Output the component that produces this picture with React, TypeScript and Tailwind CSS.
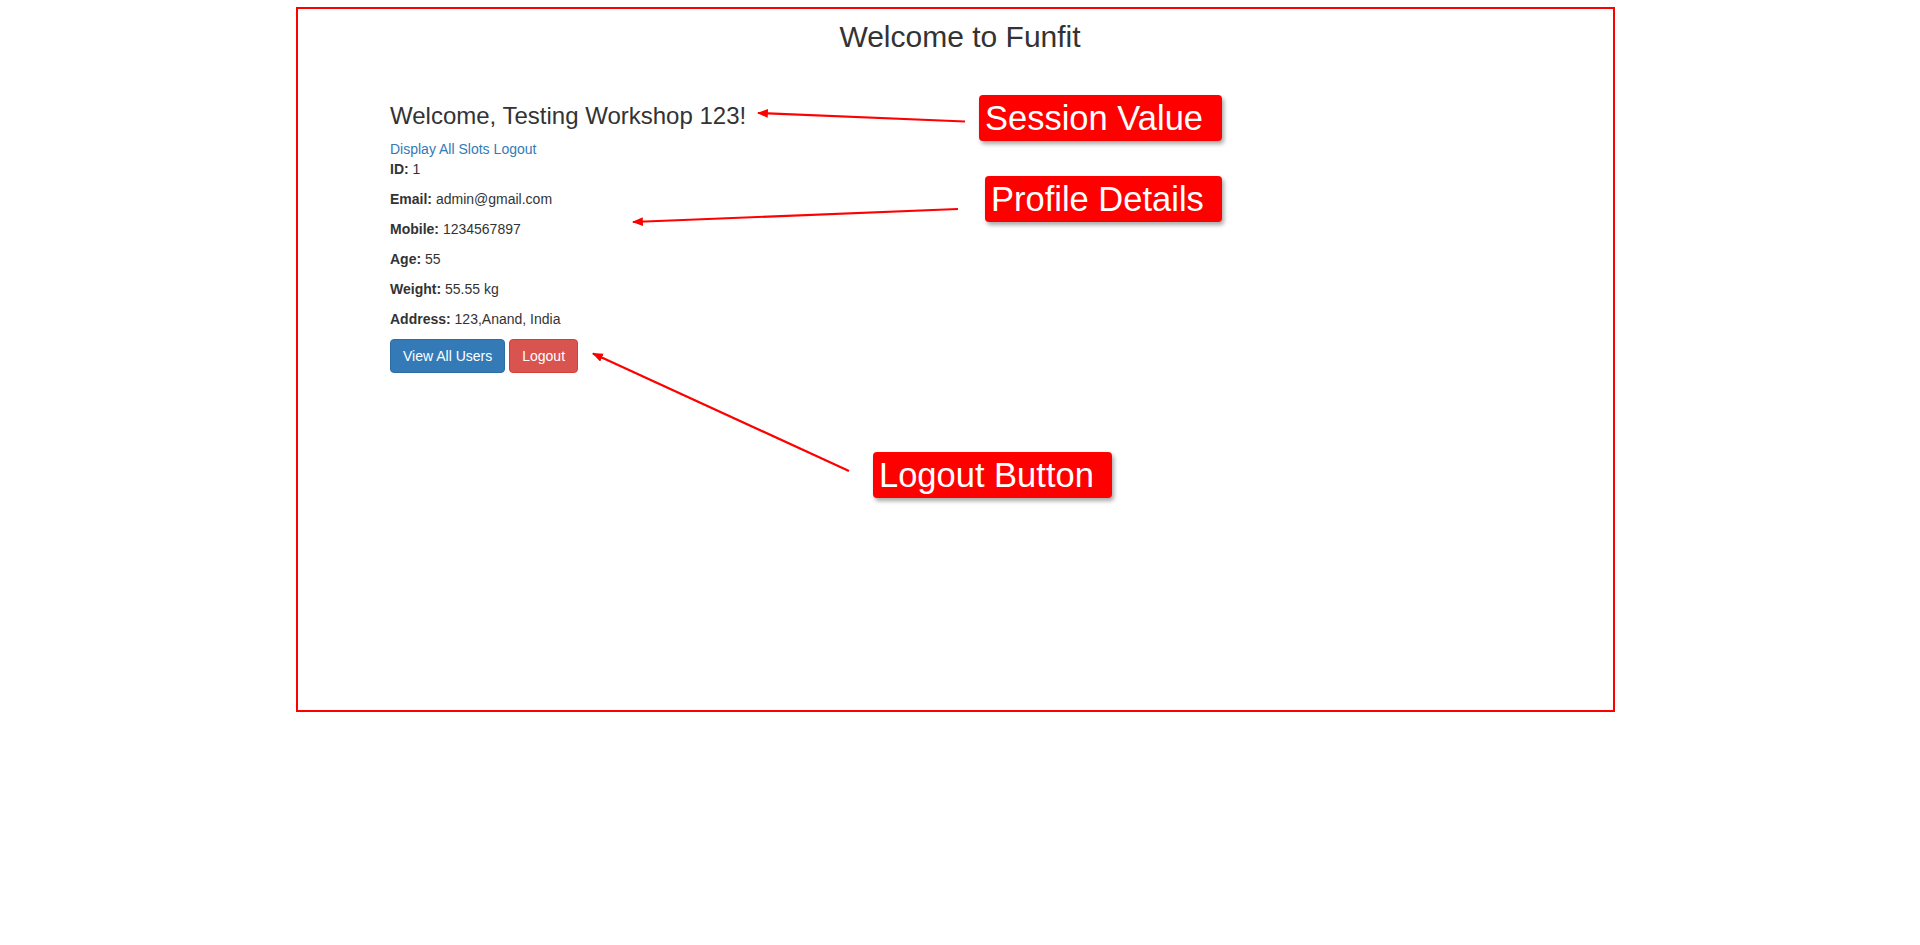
import React from "react";

const font = { fontFamily: '"Liberation Sans", Arial, Helvetica, sans-serif' };

function Label({ text, className }: { text: string; className: string }) {
  return (
    <div
      className={`absolute h-[46px] bg-[#ff0000] text-white text-[34.5px] leading-[46px] pl-[6px] rounded-[4px] shadow-[2px_3px_4px_rgba(0,0,0,0.35)] whitespace-nowrap ${className}`}
    >
      {text}
    </div>
  );
}

export default function App() {
  const rows: [string, string][] = [
    ["Email:", "admin@gmail.com"],
    ["Mobile:", "1234567897"],
    ["Age:", "55"],
    ["Weight:", "55.55 kg"],
    ["Address:", "123,Anand, India"],
  ];
  return (
    <div className="relative flow-root min-h-screen bg-white text-[#333333] text-[14px] leading-[20px]" style={font}>
      <div className="w-[1170px] mx-auto px-[15px] pt-[20px] flex flex-col">
        <h2 className="text-center text-[30px] leading-[33px] font-normal">Welcome to Funfit</h2>
        <h3 className="mt-[50px] mb-[10px] text-[24px] leading-[26.4px] font-normal">
          Welcome, Testing Workshop 123!
        </h3>
        <div className="flex gap-[4px] text-[#337ab7]">
          <a href="#" className="text-[#337ab7]">Display All Slots</a>
          <a href="#" className="text-[#337ab7]">Logout</a>
        </div>
        <div className="flex flex-col gap-[10px]">
          <p>
            <strong className="font-bold">ID:</strong> 1
          </p>
          {rows.map(([k, v]) => (
            <p key={k}>
              <strong className="font-bold">{k}</strong> {v}
            </p>
          ))}
          <div className="flex gap-[4px]">
            <button className="h-[34px] px-[12px] py-[6px] text-[14px] leading-[20px] text-white bg-[#337ab7] border border-[#2e6da4] rounded-[4px]">
              View All Users
            </button>
            <button className="h-[34px] px-[12px] py-[6px] text-[14px] leading-[20px] text-white bg-[#d9534f] border border-[#d43f3a] rounded-[4px]">
              Logout
            </button>
          </div>
        </div>
      </div>

      {/* annotation frame */}
      <div className="absolute left-[296px] top-[7px] w-[1319px] h-[705px] border-2 border-[#ff0000] pointer-events-none" />

      {/* arrows */}
      <svg className="absolute left-0 top-0 pointer-events-none" width="1920" height="945">
        <defs>
          <marker
            id="ah"
            viewBox="0 0 10 8"
            refX="9"
            refY="4"
            markerWidth="11"
            markerHeight="9"
            markerUnits="userSpaceOnUse"
            orient="auto"
          >
            <path d="M0,0 L10,4 L0,8 z" fill="#ff0000" />
          </marker>
        </defs>
        <line x1="965" y1="121.5" x2="758" y2="113" stroke="#ff0000" strokeWidth="2.2" markerEnd="url(#ah)" />
        <line x1="958" y1="209" x2="633" y2="222" stroke="#ff0000" strokeWidth="2.2" markerEnd="url(#ah)" />
        <line x1="849" y1="471" x2="593" y2="353.5" stroke="#ff0000" strokeWidth="2.2" markerEnd="url(#ah)" />
      </svg>

      <Label text="Session Value" className="left-[979px] top-[95px] w-[243px]" />
      <Label text="Profile Details" className="left-[985px] top-[176px] w-[237px]" />
      <Label text="Logout Button" className="left-[873px] top-[452px] w-[239px]" />
    </div>
  );
}
